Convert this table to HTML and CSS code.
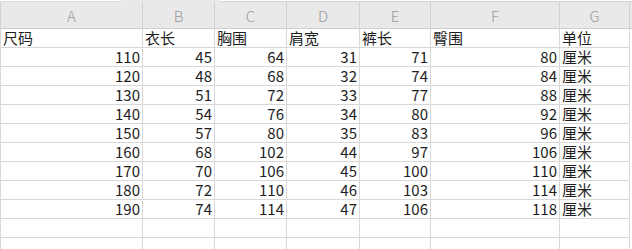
FILE: index.html
```html
<!DOCTYPE html>
<html lang="zh">
<head>
<meta charset="utf-8">
<link rel="stylesheet" href="styles.css">
</head>
<body>
<div class="sheet">
  <div class="topstrip">
    <div class="ts-left"></div>
    <div class="ts-tab"></div>
    <div class="ts-right"></div>
  </div>
  <div class="grid">
    <div class="hd">A</div><div class="hd">B</div><div class="hd">C</div><div class="hd">D</div><div class="hd">E</div><div class="hd">F</div><div class="hd">G</div><div class="hd-fill"></div>

    <div class="c t">尺码</div><div class="c t">衣长</div><div class="c t">胸围</div><div class="c t">肩宽</div><div class="c t">裤长</div><div class="c t">臀围</div><div class="c t">单位</div><div class="fill"></div>
    <div class="c n">110</div><div class="c n">45</div><div class="c n">64</div><div class="c n">31</div><div class="c n">71</div><div class="c n">80</div><div class="c t">厘米</div><div class="fill"></div>
    <div class="c n">120</div><div class="c n">48</div><div class="c n">68</div><div class="c n">32</div><div class="c n">74</div><div class="c n">84</div><div class="c t">厘米</div><div class="fill"></div>
    <div class="c n">130</div><div class="c n">51</div><div class="c n">72</div><div class="c n">33</div><div class="c n">77</div><div class="c n">88</div><div class="c t">厘米</div><div class="fill"></div>
    <div class="c n">140</div><div class="c n">54</div><div class="c n">76</div><div class="c n">34</div><div class="c n">80</div><div class="c n">92</div><div class="c t">厘米</div><div class="fill"></div>
    <div class="c n">150</div><div class="c n">57</div><div class="c n">80</div><div class="c n">35</div><div class="c n">83</div><div class="c n">96</div><div class="c t">厘米</div><div class="fill"></div>
    <div class="c n">160</div><div class="c n">68</div><div class="c n">102</div><div class="c n">44</div><div class="c n">97</div><div class="c n">106</div><div class="c t">厘米</div><div class="fill"></div>
    <div class="c n">170</div><div class="c n">70</div><div class="c n">106</div><div class="c n">45</div><div class="c n">100</div><div class="c n">110</div><div class="c t">厘米</div><div class="fill"></div>
    <div class="c n">180</div><div class="c n">72</div><div class="c n">110</div><div class="c n">46</div><div class="c n">103</div><div class="c n">114</div><div class="c t">厘米</div><div class="fill"></div>
    <div class="c n">190</div><div class="c n">74</div><div class="c n">114</div><div class="c n">47</div><div class="c n">106</div><div class="c n">118</div><div class="c t">厘米</div><div class="fill"></div>
    <div class="c"></div><div class="c"></div><div class="c"></div><div class="c"></div><div class="c"></div><div class="c"></div><div class="c"></div><div class="fill"></div>
    <div class="c"></div><div class="c"></div><div class="c"></div><div class="c"></div><div class="c"></div><div class="c"></div><div class="c"></div><div class="fill"></div>
  </div>
</div>
</body>
</html>
```

FILE: styles.css
```css
html, body {
  margin: 0;
  padding: 0;
  background: #ffffff;
}
body {
  width: 632px;
  height: 249px;
  overflow: hidden;
  font-family: "Noto Sans CJK SC", "Microsoft YaHei", sans-serif;
}
.sheet {
  width: 632px;
}
.topstrip {
  display: flex;
  height: 2px;
}
.ts-left {
  width: 120px;
  background: #ffffff;
  border-bottom: 1px solid #dcdcdc;
  box-sizing: border-box;
}
.ts-tab {
  width: 102px;
  background: #e9e9e9;
  border-radius: 4px 4px 0 0;
}
.ts-right {
  flex: 1;
  background: #ffffff;
  border-bottom: 1px solid #d4d4d4;
  box-sizing: border-box;
}
.grid {
  display: grid;
  grid-template-columns: 143px 72px 72px 73px 71px 129px 70px 2px;
  grid-template-rows: 27px repeat(11, 19px) 19px;
}
.hd, .hd-fill {
  background: #e9e9e9;
  border-bottom: 1px solid #cfcfcf;
  border-right: 1px solid #d2d2d2;
  box-sizing: border-box;
  color: #9a9a9a;
  font-size: 15px;
  font-weight: 300;
  text-align: center;
  line-height: 28px;
}
.hd:first-child {
  border-left: 1px solid #d2d2d2;
}
.hd-fill {
  border-right: none;
}
.c {
  border-right: 1px solid #d8d8d8;
  border-bottom: 1px solid #d8d8d8;
  box-sizing: border-box;
  font-size: 15px;
  line-height: 18px;
  color: #1e1e1e;
  white-space: nowrap;
}
.grid > .c:nth-child(8n+1) {
  border-left: 1px solid #d8d8d8;
}
.fill {
  background: #ffffff;
}
.t {
  text-align: left;
  padding-left: 2px;
}
.n {
  text-align: right;
  padding-right: 2px;
}
```
